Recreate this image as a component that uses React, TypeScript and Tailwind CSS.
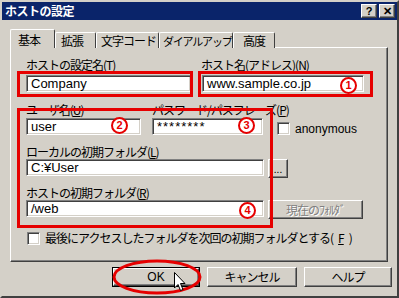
import React from 'react';

const jp = "font-['MS_UI_Gothic','Noto_Sans_CJK_JP',sans-serif]";

const sunken =
  'bg-white border border-t-[#808080] border-l-[#808080] border-r-white border-b-white shadow-[inset_1px_1px_0_#404040,inset_-1px_-1px_0_#d4d0c8]';
const raised =
  'bg-[#d4d0c8] border border-t-white border-l-white border-r-[#404040] border-b-[#404040] shadow-[inset_-1px_-1px_0_#808080]';

function Field({ value, w, pw = false }: { value: string; w: string; pw?: boolean }) {
  return (
    <div className={`${sunken} ${w} h-[17px] flex items-center pl-[4px] text-[13px] text-black font-['Liberation_Sans',sans-serif] ${pw ? 'tracking-[1px]' : ''}`}>
      {value}
    </div>
  );
}

function Label({ children, className = '' }: { children: React.ReactNode; className?: string }) {
  return <div className={`text-[12px] leading-[14px] tracking-[-1px] whitespace-nowrap text-black ${className}`}>{children}</div>;
}

function CheckBox() {
  return <div className={`${sunken} w-[13px] h-[13px] shrink-0`} />;
}

function Num({ n, x, y }: { n: number; x: number; y: number }) {
  return (
    <div
      className="absolute w-[17px] h-[17px] rounded-full border-2 border-[#e60000] bg-white flex items-center justify-center text-[11px] font-bold text-[#e60000] font-['Liberation_Sans',sans-serif] leading-none"
      style={{ left: x, top: y }}
    >
      {n}
    </div>
  );
}

const tabs = [
  { t: '拡張', w: 'w-[41px] pl-[5px] text-[12px]' },
  { t: '文字コード', w: 'w-[63px] pl-[4px] text-[12px]' },
  { t: 'ダイアルアップ', w: 'w-[74px] pl-[3px] text-[11px] tracking-[-1.2px]' },
  { t: '高度', w: 'w-[42px] pl-[9px] text-[12px]' },
];

export default function App() {
  return (
    <div className={`relative w-[399px] h-[298px] bg-[#d4d0c8] border-2 border-t-[#d4d0c8] border-l-[#d4d0c8] border-r-[#404040] border-b-[#404040] overflow-hidden ${jp}`}>
      {/* title bar */}
      <div className="h-[18px] bg-[#0a246a] flex items-center justify-between pl-[3px] pr-[2px]">
        <span className="text-white font-bold text-[12px] leading-none tracking-[-0.5px]">ホストの設定</span>
        <div className="flex gap-[2px]">
          <div className={`${raised} w-[16px] h-[14px] flex items-center justify-center text-[11px] font-bold font-['Liberation_Sans',sans-serif] leading-none`}>?</div>
          <div className={`${raised} w-[16px] h-[14px] flex items-center justify-center text-[11px] font-bold font-['Liberation_Sans',sans-serif] leading-none`}>✕</div>
        </div>
      </div>

      {/* tabs */}
      <div className="flex items-end pl-[8px] mt-[9px] h-[19px] relative z-10 whitespace-nowrap tracking-[-1px]">
        <div className="w-[45px] h-[19px] bg-[#d4d0c8] border-t border-l border-white border-r border-r-[#404040] rounded-t-[2px] text-[12px] leading-[14px] pt-[3px] pl-[7px]">基本</div>
        {tabs.map((tab) => (
          <div key={tab.t} className={`${tab.w} h-[16px] bg-[#d4d0c8] border-t border-l border-white border-r border-r-[#404040] rounded-t-[2px] leading-[14px] pt-[1px]`}>
            {tab.t}
          </div>
        ))}
      </div>

      {/* panel */}
      <div className="mx-[8px] w-[378px] h-[215px] border border-t-white border-l-white border-r-[#404040] border-b-[#404040] shadow-[inset_-1px_-1px_0_#808080] -mt-px pl-[15px] pt-[10px]">
        <div className="flex gap-[10px]">
          <div>
            <Label>ホストの設定名(<u>T</u>)</Label>
            <div className="mt-[3px]"><Field value="Company" w="w-[165px]" /></div>
          </div>
          <div>
            <Label>ホスト名(アドレス)(<u>N</u>)</Label>
            <div className="mt-[3px] ml-px"><Field value="www.sample.co.jp" w="w-[162px]" /></div>
          </div>
        </div>

        <div className="flex mt-[11px]">
          <div className="w-[126px]">
            <Label>ユーザ名(<u>U</u>)</Label>
            <div className="mt-[1px]"><Field value="user" w="w-[115px]" /></div>
          </div>
          <div className="w-[125px]">
            <Label>パスワード/パスフレーズ(<u>P</u>)</Label>
            <div className="mt-[1px]"><Field value="********" w="w-[111px]" pw /></div>
          </div>
          <div className="flex items-center gap-[5px] mt-[19px] h-[13px] text-[12px] font-['Liberation_Sans',sans-serif]">
            <CheckBox />
            anonymous
          </div>
        </div>

        <Label className="mt-[10px] leading-[13px]">ローカルの初期フォルダ(<u>L</u>)</Label>
        <div className="flex gap-[4px]">
          <Field value="C:¥User" w="w-[238px]" />
          <div className={`${raised} w-[20px] h-[19px] flex items-end justify-center pb-[3px] text-[10px] leading-none`}>...</div>
        </div>

        <Label className="mt-[8px] leading-[13px]">ホストの初期フォルダ(<u>R</u>)</Label>
        <div className="flex gap-[4px]">
          <Field value="/web" w="w-[238px]" />
          <div className={`${raised} w-[95px] h-[19px] flex items-center justify-center text-[12px] tracking-[-1px] text-[#808080] [text-shadow:1px_1px_0_#fff]`}>現在のﾌｫﾙﾀﾞ</div>
        </div>

        <div className="flex items-center gap-[5px] mt-[10px] text-[12px] tracking-[-1px] whitespace-nowrap pl-px">
          <CheckBox />
          最後にアクセスしたフォルダを次回の初期フォルダとする(<u>F</u>)
        </div>
      </div>

      {/* buttons */}
      <div className="flex gap-[7px] pl-[110px] mt-[5px] tracking-[-1px]">
        <div className="w-[88px] h-[20px] border border-black">
          <div className={`${raised} w-full h-full flex items-center justify-center text-[12px] tracking-normal font-['Liberation_Sans',sans-serif]`}>OK</div>
        </div>
        <div className={`${raised} w-[90px] h-[20px] flex items-center justify-center text-[12px]`}>キャンセル</div>
        <div className={`${raised} w-[88px] h-[20px] flex items-center justify-center text-[12px]`}>ヘルプ</div>
      </div>

      {/* annotations */}
      <div className="absolute left-[15px] top-[69px] w-[176px] h-[26px] border-[3px] border-[#e60000]" />
      <div className="absolute left-[196px] top-[69px] w-[175px] h-[26px] border-[3px] border-[#e60000]" />
      <div className="absolute left-[15px] top-[106px] w-[256px] h-[120px] border-[3px] border-[#e60000]" />
      <Num n={1} x={338} y={75} />
      <Num n={2} x={109} y={115} />
      <Num n={3} x={236} y={115} />
      <Num n={4} x={237} y={200} />
      <svg className="absolute left-[109px] top-[256px]" width="92" height="38" viewBox="0 0 92 38">
        <ellipse cx="46" cy="19" rx="43" ry="16" fill="none" stroke="#e60000" strokeWidth="3" />
      </svg>
      <svg className="absolute left-[172px] top-[270px]" width="12" height="20" viewBox="0 0 12 20">
        <path d="M0.5 0.5 L0.5 16 L4 12.5 L6.5 18.5 L9 17.5 L6.5 11.5 L11 11.5 Z" fill="#fff" stroke="#000" strokeWidth="1" />
      </svg>
    </div>
  );
}
